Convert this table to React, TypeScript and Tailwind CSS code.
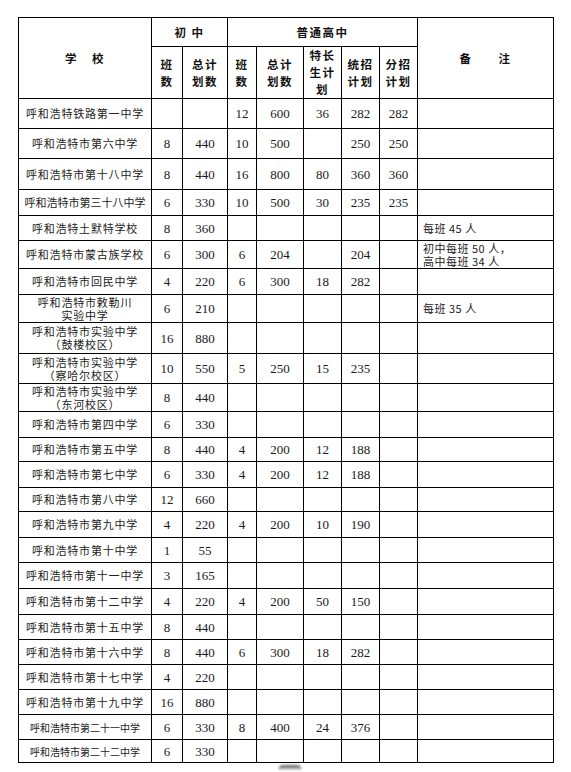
import React from 'react';

type Row = {
  name: string;
  v: string[];
  note?: string;
  h: number;
  small?: 'tight' | 'tiny';
};

const rows: Row[] = [
  { name: '呼和浩特铁路第一中学', v: ['', '', '12', '600', '36', '282', '282'], h: 30 },
  { name: '呼和浩特市第六中学', v: ['8', '440', '10', '500', '', '250', '250'], h: 30 },
  { name: '呼和浩特市第十八中学', v: ['8', '440', '16', '800', '80', '360', '360'], h: 31 },
  { name: '呼和浩特市第三十八中学', v: ['6', '330', '10', '500', '30', '235', '235'], h: 26, small: 'tight' },
  { name: '呼和浩特土默特学校', v: ['8', '360', '', '', '', '', ''], note: '每班 45 人', h: 25 },
  { name: '呼和浩特市蒙古族学校', v: ['6', '300', '6', '204', '', '204', ''], note: '初中每班 50 人，\n高中每班 34 人', h: 28 },
  { name: '呼和浩特市回民中学', v: ['4', '220', '6', '300', '18', '282', ''], h: 26 },
  { name: '呼和浩特市敕勒川\n实验中学', v: ['6', '210', '', '', '', '', ''], note: '每班 35 人', h: 28 },
  { name: '呼和浩特市实验中学\n（鼓楼校区）', v: ['16', '880', '', '', '', '', ''], h: 31 },
  { name: '呼和浩特市实验中学\n（察哈尔校区）', v: ['10', '550', '5', '250', '15', '235', ''], h: 30 },
  { name: '呼和浩特市实验中学\n（东河校区）', v: ['8', '440', '', '', '', '', ''], h: 28 },
  { name: '呼和浩特市第四中学', v: ['6', '330', '', '', '', '', ''], h: 26 },
  { name: '呼和浩特市第五中学', v: ['8', '440', '4', '200', '12', '188', ''], h: 24 },
  { name: '呼和浩特市第七中学', v: ['6', '330', '4', '200', '12', '188', ''], h: 26 },
  { name: '呼和浩特市第八中学', v: ['12', '660', '', '', '', '', ''], h: 24 },
  { name: '呼和浩特市第九中学', v: ['4', '220', '4', '200', '10', '190', ''], h: 26 },
  { name: '呼和浩特市第十中学', v: ['1', '55', '', '', '', '', ''], h: 25 },
  { name: '呼和浩特市第十一中学', v: ['3', '165', '', '', '', '', ''], h: 26 },
  { name: '呼和浩特市第十二中学', v: ['4', '220', '4', '200', '50', '150', ''], h: 26 },
  { name: '呼和浩特市第十五中学', v: ['8', '440', '', '', '', '', ''], h: 25 },
  { name: '呼和浩特市第十六中学', v: ['8', '440', '6', '300', '18', '282', ''], h: 25 },
  { name: '呼和浩特市第十七中学', v: ['4', '220', '', '', '', '', ''], h: 25 },
  { name: '呼和浩特市第十九中学', v: ['16', '880', '', '', '', '', ''], h: 25 },
  { name: '呼和浩特市第二十一中学', v: ['6', '330', '8', '400', '24', '376', ''], h: 25, small: 'tiny' },
  { name: '呼和浩特市第二十二中学', v: ['6', '330', '', '', '', '', ''], h: 23, small: 'tiny' },
];

const cjk = "font-['Noto_Sans_CJK_SC','Noto_Sans',sans-serif]";
const num = "font-['Liberation_Serif','Times_New_Roman',serif]";
const cell = 'border border-black p-0 align-middle text-center';
const head = `${cell} ${cjk} font-bold text-[11.5px] leading-[17px] tracking-[1.5px] text-[#111]`;

function nameClass(small?: Row['small']) {
  if (small === 'tight') return 'text-[11px] tracking-[0px]';
  if (small === 'tiny') return 'text-[10px] tracking-[0px]';
  return 'text-[11px] tracking-[0.8px]';
}

export default function App() {
  return (
    <div className="bg-white w-[571px] min-h-[772px] pt-[17px] pl-[18px]">
      <table className="table-fixed border-collapse w-[535px]">
        <colgroup>
          <col className="w-[133px]" />
          <col className="w-[31px]" />
          <col className="w-[45px]" />
          <col className="w-[29px]" />
          <col className="w-[47px]" />
          <col className="w-[38px]" />
          <col className="w-[38px]" />
          <col className="w-[38px]" />
          <col className="w-[136px]" />
        </colgroup>
        <thead>
          <tr className="h-[29px]">
            <th rowSpan={2} className={head}>
              学<span className="inline-block w-[14px]" />校
            </th>
            <th colSpan={2} className={head}>
              初 中
            </th>
            <th colSpan={5} className={head}>
              普通高中
            </th>
            <th rowSpan={2} className={head}>
              备<span className="inline-block w-[26px]" />注
            </th>
          </tr>
          <tr className="h-[52px]">
            <th className={head}>班<br />数</th>
            <th className={head}>总计<br />划数</th>
            <th className={head}>班<br />数</th>
            <th className={head}>总计<br />划数</th>
            <th className={head}>特长<br />生计<br />划</th>
            <th className={head}>统招<br />计划</th>
            <th className={head}>分招<br />计划</th>
          </tr>
        </thead>
        <tbody>
          {rows.map((r, i) => (
            <tr key={i} style={{ height: r.h }}>
              <td className={`${cell} ${cjk} ${nameClass(r.small)} leading-[13px] text-[#222] whitespace-pre-line`}>
                {r.name}
              </td>
              {r.v.map((x, j) => (
                <td key={j} className={`${cell} ${num} text-[13px] leading-[15px] text-[#1a1a1a]`}>
                  {x}
                </td>
              ))}
              <td className={`${cell} text-left pl-[5px] ${cjk} text-[11px] tracking-[0.5px] leading-[13px] text-[#222] whitespace-pre-line`}>
                {r.note}
              </td>
            </tr>
          ))}
        </tbody>
      </table>
      <div className="ml-[260px] mt-[2px] w-[24px] h-[5px] rounded-t-full bg-gradient-to-b from-[#555] to-[#ddd] blur-[1px]" />
    </div>
  );
}
